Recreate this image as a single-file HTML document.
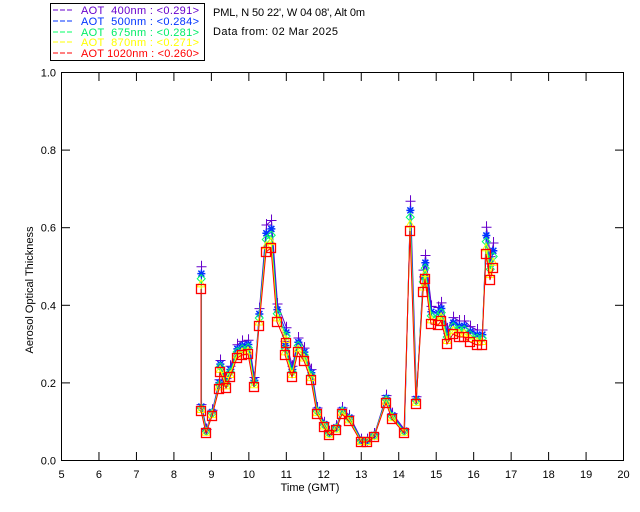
<!DOCTYPE html>
<html><head><meta charset="utf-8"><style>
html,body{margin:0;padding:0;background:#fff;width:640px;height:512px;overflow:hidden}
svg{display:block}
text{font-family:"Liberation Sans",sans-serif;font-size:11px}
</style></head><body>
<svg id="s" width="640" height="512" xmlns="http://www.w3.org/2000/svg">
<rect x="50.5" y="3.5" width="154" height="57" fill="none" stroke="#000"/>
<g font-size="11">
<line x1="53" y1="10" x2="74" y2="10" stroke="#6600cc" stroke-dasharray="5,2"/>
<text x="81" y="14" fill="#6600cc" textLength="118" lengthAdjust="spacing" xml:space="preserve">AOT  400nm : &lt;0.291&gt;</text>
<line x1="53" y1="21" x2="74" y2="21" stroke="#0033ff" stroke-dasharray="5,2"/>
<text x="81" y="25" fill="#0033ff" textLength="118" lengthAdjust="spacing" xml:space="preserve">AOT  500nm : &lt;0.284&gt;</text>
<line x1="53" y1="32" x2="74" y2="32" stroke="#00ff66" stroke-dasharray="5,2"/>
<text x="81" y="36" fill="#00ee66" textLength="118" lengthAdjust="spacing" xml:space="preserve">AOT  675nm : &lt;0.281&gt;</text>
<line x1="53" y1="42" x2="74" y2="42" stroke="#ffff00" stroke-dasharray="5,2"/>
<text x="81" y="46" fill="#ffff00" textLength="118" lengthAdjust="spacing" xml:space="preserve">AOT  870nm : &lt;0.271&gt;</text>
<line x1="53" y1="53" x2="74" y2="53" stroke="#ff0000" stroke-dasharray="5,2"/>
<text x="81" y="57" fill="#ff0000" textLength="118" lengthAdjust="spacing">AOT 1020nm : &lt;0.260&gt;</text>
</g>
<text x="213" y="16" textLength="152" lengthAdjust="spacing">PML, N 50 22', W 04 08', Alt 0m</text>
<text x="213" y="35" textLength="125" lengthAdjust="spacing">Data from: 02 Mar 2025</text>
<rect x="61.5" y="72.5" width="562" height="388" fill="none" stroke="#000"/>
<g id="ax"></g>
<text x="310" y="491" text-anchor="middle">Time (GMT)</text>
<text transform="translate(33,290) rotate(-90)" text-anchor="middle" font-size="10">Aerosol Optical Thickness</text>
<g id="d"></g>
</svg>
<script>
var ns="http://www.w3.org/2000/svg",ax=document.getElementById('ax'),d=document.getElementById('d');
function el(n,a,p){var e=document.createElementNS(ns,n);for(var k in a)e.setAttribute(k,a[k]);(p||d).appendChild(e);return e;}
for(var t=5;t<=20;t++){var x=61.5+(t-5)*37.47;
 if(t>5&&t<20){el('line',{x1:x,y1:460,x2:x,y2:452,stroke:'#000'},ax);el('line',{x1:x,y1:73,x2:x,y2:81,stroke:'#000'},ax);}
 var tx=el('text',{x:x,y:478,'text-anchor':'middle'},ax);tx.textContent=t;}
for(var i=0;i<=5;i++){var y=460.5-i*77.6;
 if(i>0&&i<5){el('line',{x1:62,y1:y,x2:70,y2:y,stroke:'#000'},ax);el('line',{x1:623,y1:y,x2:615,y2:y,stroke:'#000'},ax);}
 var tx=el('text',{x:56,y:y+4,'text-anchor':'end'},ax);tx.textContent=(i*0.2).toFixed(1);}
var R=[[201,289],[201,411],[206,433],[212,416],[219,389],[220,372],[226,388],[230,377],[237,358],[242,355],[248,354],[254,387],[259,326],[266,252],[271,248],[277,322],[286,343],[285,355],[292,377],[298,352],[304,361],[311,380],[317,414],[324,427],[329,435],[336,430],[342,414],[349,421],[361,442],[367,442],[374,437],[386,403],[392,419],[404,433],[410,231],[416,404],[423,292],[425,279],[431,324],[438,325],[441,321],[447,344],[453,334],[459,337],[464,337],[470,342],[477,345],[482,345],[486,254],[490,280],[493,268]];
var S=[['#6600cc',1.13,'+'],['#0033ff',1.09,'*'],['#00ff66',1.06,'d'],['#ffff00',1.03,'t'],['#ff0000',1,'s']];
S.forEach(function(s){var pts=R.map(function(p){var v=(460-p[1])*s[1];return [p[0]+(s[1]-1)*4,460-v];});
 el('polyline',{points:pts.map(function(p){return p.join(',')}).join(' '),fill:'none',stroke:s[0]});
 pts.forEach(function(p){var x=p[0],y=p[1];
  if(s[2]=='+'){el('path',{d:'M'+(x-5)+' '+y+'h10M'+x+' '+(y-6)+'v12',stroke:s[0],fill:'none'});}
  else if(s[2]=='*'){el('path',{d:'M'+(x-4)+' '+y+'h8M'+x+' '+(y-4)+'v8M'+(x-3)+' '+(y-3)+'l6 6M'+(x+3)+' '+(y-3)+'l-6 6',stroke:s[0],fill:'none','stroke-width':1.5});}
  else if(s[2]=='d'){el('path',{d:'M'+x+' '+(y-4)+'l4 4l-4 4l-4 -4z',stroke:s[0],fill:'none'});}
  else if(s[2]=='t'){el('path',{d:'M'+x+' '+(y-4)+'l4 7h-8z',stroke:s[0],fill:'none'});}
  else {el('rect',{x:x-4.5,y:y-4.5,width:9,height:9,stroke:s[0],fill:'none','stroke-width':1.3});}
 });});
</script>
</body></html>
